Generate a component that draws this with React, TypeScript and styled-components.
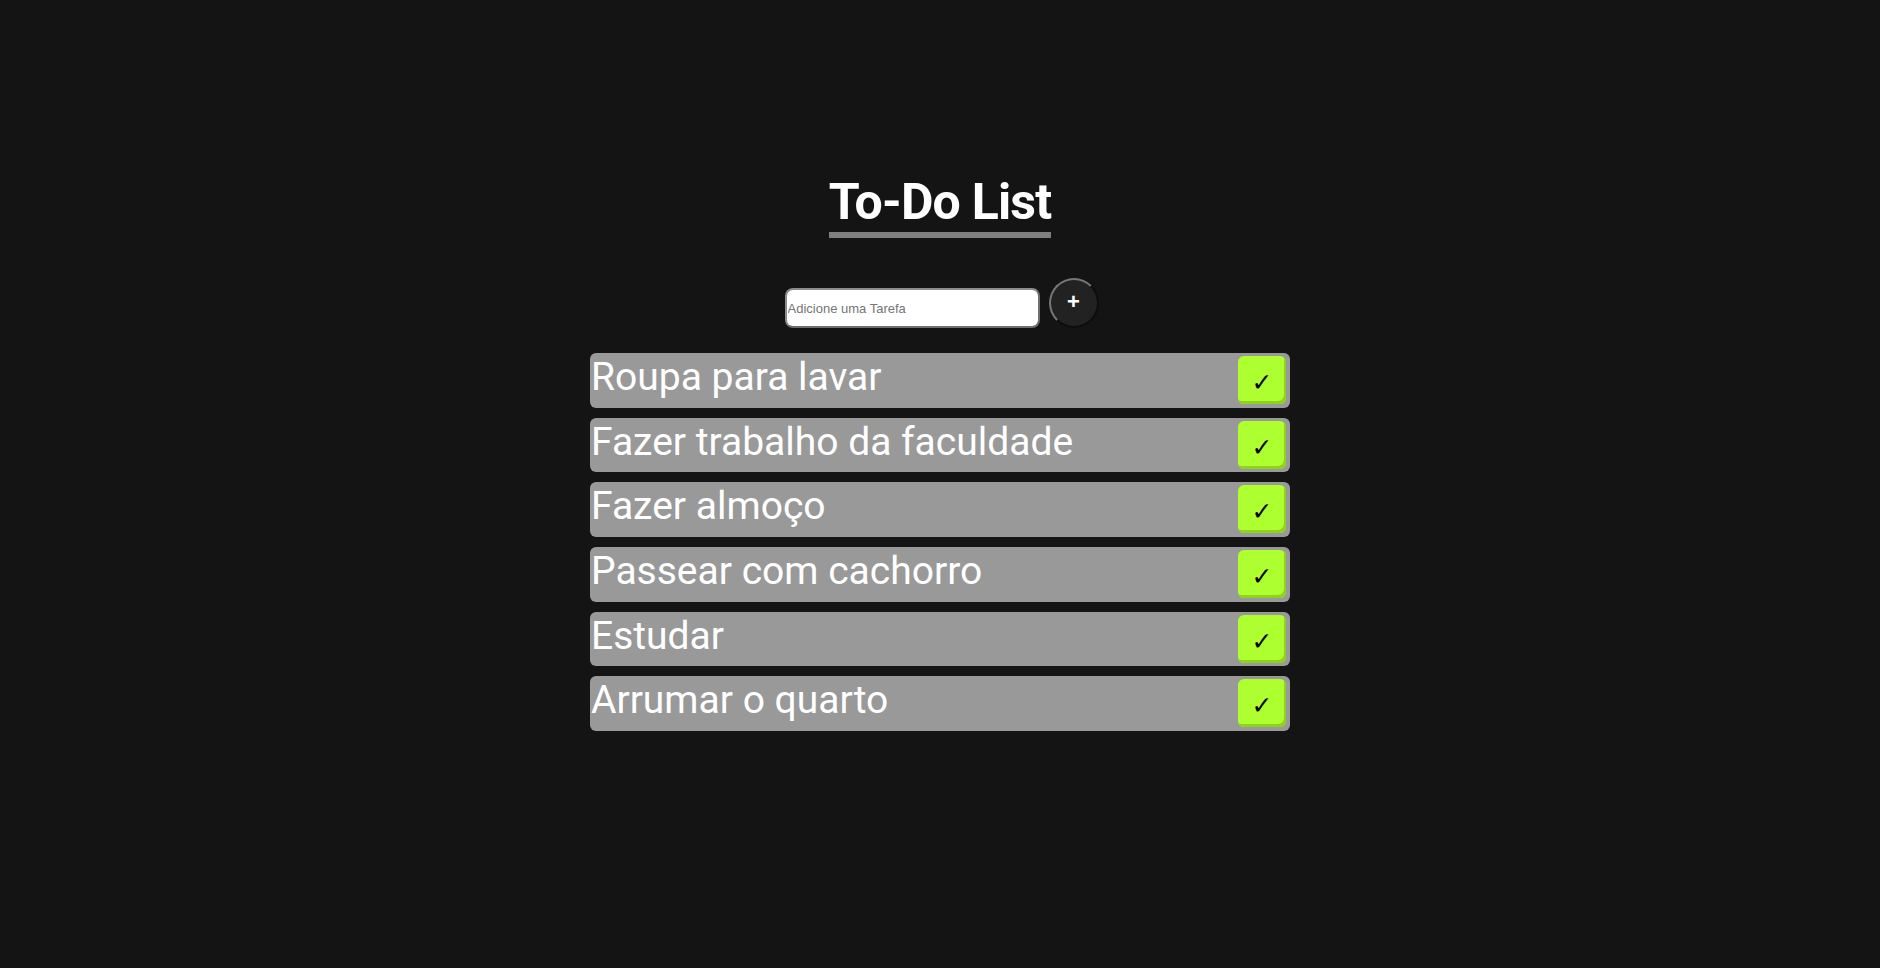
import React from "react";
import styled, { createGlobalStyle } from "styled-components";

const Global = createGlobalStyle`
  html, body { margin: 0; padding: 0; background: #141414; }
  body { font-family: Roboto, "Noto Sans", sans-serif; min-height: 968px; }
`;

const Page = styled.main`
  display: flex;
  flex-direction: column;
  align-items: center;
  padding-top: 172px;
`;

const Title = styled.h1`
  margin: 0;
  color: #ffffff;
  font-family: Roboto, sans-serif;
  font-weight: 700;
  font-size: 50px;
  line-height: 60px;
  letter-spacing: -0.8px;
  border-bottom: 6px solid #808080;
  padding-bottom: 0;
`;

const Form = styled.form`
  display: flex;
  align-items: center;
  gap: 9px;
  margin-top: 40px;
  margin-left: 3px;
`;

const Input = styled.input`
  box-sizing: border-box;
  width: 255px;
  height: 40px;
  border-radius: 8px;
  border: 2px inset #767676;
  border-color: #e0e0e0 #6e6e6e #6e6e6e #e0e0e0;
  background: #ffffff;
  padding: 0 0 0 1px;
  font-family: "Liberation Sans", Arial, sans-serif;
  font-size: 13px;
  margin-top: 10px;
  &::placeholder { color: #757575; }
`;

const AddButton = styled.button`
  box-sizing: border-box;
  width: 50px;
  height: 50px;
  border-radius: 50%;
  background: #222222;
  border: 2px solid;
  border-color: #777777 #0d0d0d #0d0d0d #777777;
  color: #ffffff;
  font-family: "Liberation Sans", Arial, sans-serif;
  font-weight: 700;
  font-size: 22px;
  line-height: 1;
  display: flex;
  align-items: center;
  justify-content: center;
  padding: 0 0 2px 0;
`;

const List = styled.ul`
  list-style: none;
  margin: 25px 0 0 0;
  padding: 0;
  width: 700px;
  display: flex;
  flex-direction: column;
  gap: 10.2px;
`;

const Row = styled.li`
  box-sizing: border-box;
  height: 54.5px;
  background: #999999;
  border-radius: 6px;
  display: flex;
  justify-content: space-between;
  align-items: flex-start;
  padding-right: 4px;
`;

const RowText = styled.span`
  color: #ffffff;
  font-family: Roboto, sans-serif;
  font-size: 39px;
  line-height: 44px;
  padding: 2px 0 0 1px;
`;

const Check = styled.button`
  box-sizing: border-box;
  margin-top: 3px;
  width: 48px;
  height: 48px;
  border-radius: 6px;
  background: #adff2f;
  border: none;
  box-shadow: inset -2px -3px 0 #8fd11f;
  color: #000000;
  font-size: 25px;
  font-family: "DejaVu Sans", sans-serif;
  display: flex;
  align-items: center;
  justify-content: center;
  padding: 5px 0 0 0;
`;

const tasks = [
  "Roupa para lavar",
  "Fazer trabalho da faculdade",
  "Fazer almoço",
  "Passear com cachorro",
  "Estudar",
  "Arrumar o quarto",
];

export default function App() {
  return (
    <>
      <Global />
      <Page>
        <Title>To-Do List</Title>
        <Form onSubmit={(e) => e.preventDefault()}>
          <Input placeholder="Adicione uma Tarefa" />
          <AddButton type="submit">+</AddButton>
        </Form>
        <List>
          {tasks.map((t) => (
            <Row key={t}>
              <RowText>{t}</RowText>
              <Check type="button">✓</Check>
            </Row>
          ))}
        </List>
      </Page>
    </>
  );
}
